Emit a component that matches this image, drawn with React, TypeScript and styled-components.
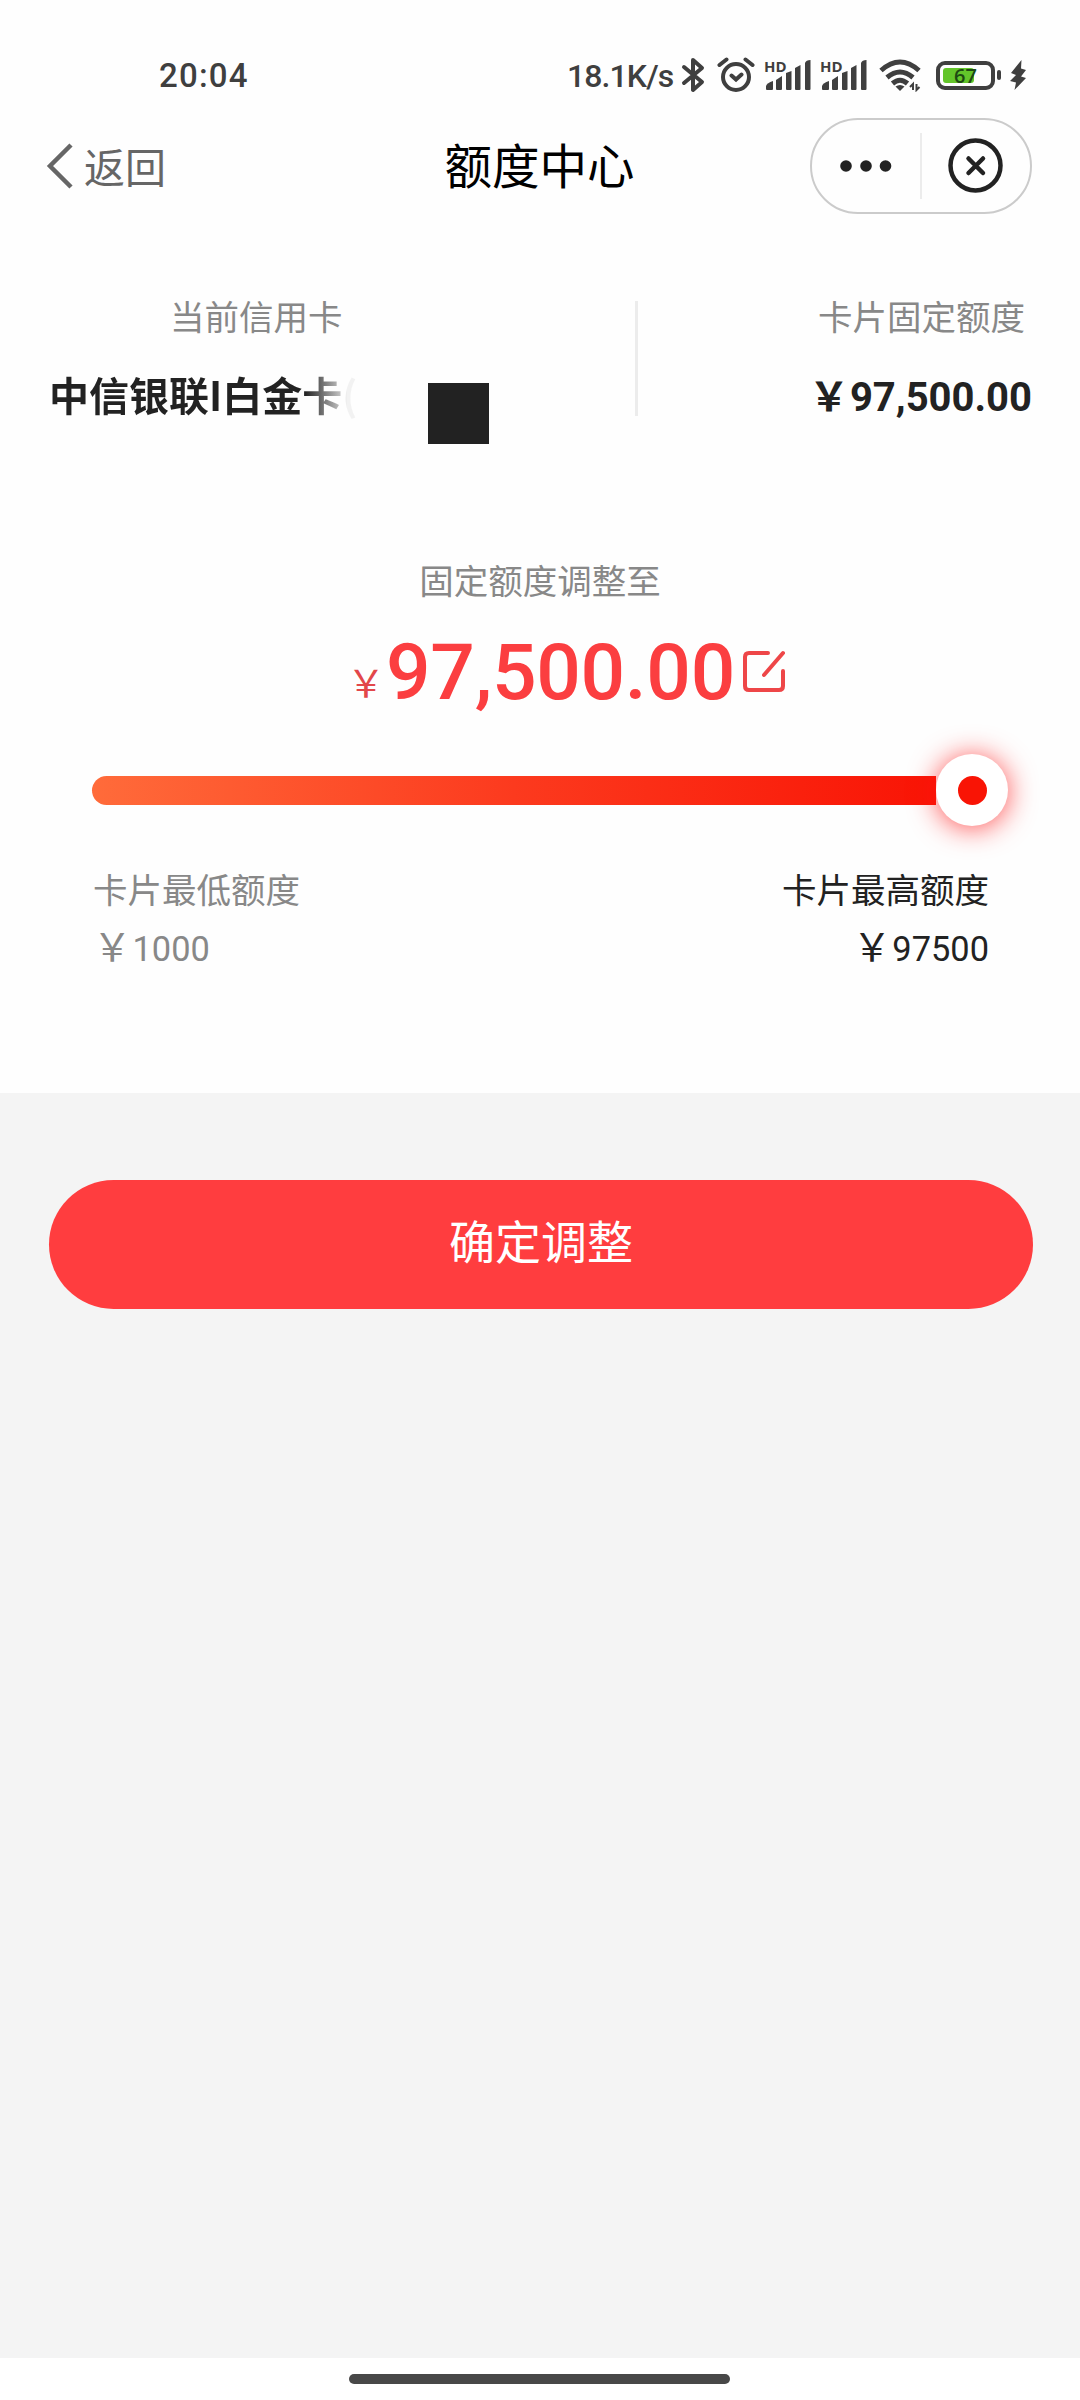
import React from "react";
import styled, { createGlobalStyle } from "styled-components";

const cjk = `"Noto Sans CJK SC", sans-serif`;
const latin = `Roboto, "Noto Sans CJK SC", sans-serif`;

const GlobalStyle = createGlobalStyle`
  * { box-sizing: border-box; }
  body { margin: 0; background: #fff; font-family: ${cjk}; }
`;

const Screen = styled.div`
  width: 1080px;
  height: 2400px;
  display: flex;
  flex-direction: column;
  background: #fefefe;
  overflow: hidden;
`;

const StatusBar = styled.header`
  height: 98px;
  padding: 52px 53px 0 159px;
  display: flex;
  justify-content: space-between;
  align-items: flex-start;
  color: #3f3f3f;
`;

const Clock = styled.span`
  padding-top: 1px;
  font: 500 33px/46px ${latin};
  letter-spacing: 1.2px;
`;

const StatusIcons = styled.div`
  display: flex;
  height: 46px;
  align-items: center;
`;

const Speed = styled.span`
  width: 112px;
  padding-top: 1px;
  font: 500 32px/46px ${latin};
  letter-spacing: -0.9px;
  white-space: nowrap;
`;

const StatusIcon = styled.svg<{ $gap: number }>`
  display: block;
  flex: none;
  margin-left: ${(p) => p.$gap}px;
`;

const Signal = styled.div<{ $gap: number }>`
  position: relative;
  width: 48px;
  height: 34px;
  margin-left: ${(p) => p.$gap}px;
`;

const HdTag = styled.span`
  position: absolute;
  left: 0;
  top: 1px;
  font: 700 15px/15px "Open Sans", sans-serif;
`;

const Battery = styled.div`
  width: 59px;
  height: 29px;
  margin-left: 15px;
  padding: 3px 3px;
  border: 4px solid #3f3f3f;
  border-radius: 9px;
  display: flex;
  position: relative;
`;

const Charge = styled.div`
  width: 31px;
  height: 15px;
  border-radius: 3px;
  background: #63c52a;
`;

const ChargeText = styled.span`
  position: absolute;
  inset: 0;
  text-align: center;
  font: 600 20px/21px "Open Sans", sans-serif;
  color: #1d4a12;
`;

const BatteryTip = styled.div`
  width: 4px;
  height: 10px;
  margin-left: 2px;
  border-radius: 2px;
  background: #3f3f3f;
`;

const NavBar = styled.nav`
  height: 136px;
  padding: 0 48px 0 46px;
  display: grid;
  grid-template-columns: 1fr auto 1fr;
  align-items: center;
`;

const Back = styled.button`
  display: flex;
  align-items: center;
  gap: 10px;
  padding: 0;
  border: 0;
  background: none;
  color: #666;
  font: 400 41px/60px ${cjk};
`;

const BackText = styled.span`
  padding-bottom: 2px;
`;

const Title = styled.h1`
  margin: 0;
  padding: 0 0 4px 1px;
  color: #000;
  font: 400 47.5px/64px ${cjk};
`;

const Capsule = styled.div`
  justify-self: end;
  width: 222px;
  height: 96px;
  border: 2px solid #cbcbcb;
  border-radius: 48px;
  display: grid;
  grid-template-columns: 110px 1fr;
  align-items: center;
`;

const MoreCell = styled.div`
  height: 66px;
  display: flex;
  align-items: center;
  justify-content: center;
  border-right: 2px solid #ececec;
`;

const CloseCell = styled.div`
  display: flex;
  justify-content: center;
`;

const Panel = styled.main`
  height: 859px;
  flex: none;
  background: #fefefe;
`;

const Summary = styled.section`
  height: 323px;
  padding: 59px 48px 0 49px;
  display: flex;
  align-items: flex-start;
`;

const CardColumn = styled.div`
  width: 586px;
  display: flex;
  flex-direction: column;
`;

const Label = styled.div`
  color: #888;
  font: 400 34.5px/44px ${cjk};
`;

const CardLabel = styled(Label)`
  padding-left: 121px;
`;

const CardRow = styled.div`
  display: flex;
  align-items: flex-start;
  margin-top: 29px;
`;

const CardName = styled.div`
  width: 379px;
  font: 700 40px/56px ${cjk};
  white-space: nowrap;
  color: transparent;
  background: linear-gradient(90deg, #222 0 256px, #c4c4c4 292px, #f2f2f2 298px);
  background-clip: text;
  -webkit-background-clip: text;
`;

const CardMask = styled.div`
  width: 61px;
  height: 61px;
  margin-top: 17px;
  background: #222;
`;

const Rule = styled.div`
  width: 3px;
  height: 115px;
  margin-top: 8px;
  background: #ececec;
`;

const LimitColumn = styled.div`
  flex: 1;
  display: flex;
  flex-direction: column;
  align-items: flex-end;
`;

const LimitLabel = styled(Label)`
  padding-right: 7px;
`;

const Money = styled.div<{ $size: number; $line: number; $weight: number }>`
  display: flex;
  align-items: baseline;
  font: ${(p) => p.$weight} ${(p) => p.$size}px/${(p) => p.$line}px ${latin};
`;

const Yen = styled.span<{ $size: number }>`
  margin-right: 1px;
  font-family: ${cjk};
  font-size: ${(p) => p.$size}px;
`;

const LimitMoney = styled(Money)`
  margin-top: 29px;
  color: #222;
`;

const Adjust = styled.section`
  display: flex;
  flex-direction: column;
  align-items: center;
`;

const AmountRow = styled.div`
  height: 96px;
  margin-top: 23px;
  padding-left: 347px;
  align-self: flex-start;
  display: flex;
  align-items: center;
  color: #fb3e40;
`;

const AmountYen = styled.span`
  width: 39px;
  margin-top: 18px;
  font: 400 38px/44px ${cjk};
  color: #e2474a;
`;

const Amount = styled.span`
  width: 350px;
  font: 500 78.5px/96px ${latin};
  letter-spacing: -0.3px;
`;

const EditIcon = styled.svg`
  display: block;
  margin-left: 6px;
`;

const Slider = styled.div`
  height: 72px;
  margin: 34px 72px 0 92px;
  display: flex;
  align-items: center;
`;

const Track = styled.div`
  flex: 1;
  height: 29px;
  border-radius: 15px 0 0 15px;
  background: linear-gradient(90deg, #ff6b3a 0%, #fc3a1e 50%, #f91405 100%);
`;

const Thumb = styled.div`
  width: 72px;
  height: 72px;
  border-radius: 50%;
  background: #fff;
  display: grid;
  place-items: center;
  box-shadow: 0 2px 28px rgba(255, 20, 20, 0.75);
`;

const ThumbDot = styled.div`
  width: 29px;
  height: 29px;
  border-radius: 50%;
  background: #f91405;
`;

const Range = styled.div`
  display: flex;
  justify-content: space-between;
  padding: 40px 91px 0 93px;
`;

const Bound = styled.div<{ $color: string; $end?: boolean }>`
  display: flex;
  flex-direction: column;
  align-items: ${(p) => (p.$end ? "flex-end" : "flex-start")};
  color: ${(p) => p.$color};
`;

const BoundLabel = styled(Label)`
  color: inherit;
`;

const BoundMoney = styled(Money)`
  margin-top: 12px;
`;

const Footer = styled.section`
  flex: 1;
  padding: 87px 47px 0 49px;
  background: #f4f4f4;
`;

const Confirm = styled.button`
  display: block;
  width: 100%;
  height: 129px;
  padding: 0 0 12px;
  border: 0;
  border-radius: 65px;
  background: #ff3d3f;
  color: #fff;
  font: 400 46px/60px ${cjk};
`;

const HomeArea = styled.div`
  height: 42px;
  padding: 16px 0 0 349px;
  background: #fff;
`;

const HomeBar = styled.div`
  width: 381px;
  height: 10px;
  border-radius: 5px;
  background: #484848;
`;

function SignalBars({ gap }: { gap: number }) {
  return (
    <Signal $gap={gap}>
      <HdTag>HD</HdTag>
      <svg width="48" height="34" fill="#3f3f3f">
        <path d="M2 31v-3q1-3 7-5v8q0 1-1 1H3q-1 0-1-1z" />
        <path d="M12 31V22l6-4v13q0 1-1 1h-4q-1 0-1-1z" />
        <path d="M22 31V15l5.500-2v18q0 1-1 1h-3.500q-1 0-1-1z" />
        <path d="M31 31V10l5.500-3v24q0 1-1 1h-3.500q-1 0-1-1z" />
        <path d="M41 31V5q1-3 5.500-3v29q0 1-1 1h-3.500q-1 0-1-1z" />
      </svg>
    </Signal>
  );
}

export default function App() {
  return (
    <>
      <GlobalStyle />
      <Screen>
        <StatusBar>
          <Clock>20:04</Clock>
          <StatusIcons>
            <Speed>18.1K/s</Speed>
            <StatusIcon $gap={2} width="24" height="36" fill="none" stroke="#3f3f3f" strokeWidth="4" strokeLinejoin="round" strokeLinecap="round">
              <path d="M3 10l18 15-9 8V3l9 8L3 26" />
            </StatusIcon>
            <StatusIcon $gap={12} width="38" height="36" fill="none" stroke="#3f3f3f" strokeWidth="4" strokeLinecap="round">
              <circle cx="19" cy="20" r="13" />
              <path d="M2.500 8l7-5.500M35.500 8l-7-5.500M14.500 18.500l4.500 4 5.500-5" />
            </StatusIcon>
            <SignalBars gap={9} />
            <SignalBars gap={8} />
            <StatusIcon $gap={10} width="43" height="34" fill="none" stroke="#3f3f3f" strokeWidth="5">
              <path d="M3 12.500q19-17 38 0M9 19.500q13-11 26 0M14.500 25.500q7.500-6.500 15 0" />
              <path d="M17.500 28.500q4.500-3 9 0l-4.500 4.500z" fill="#3f3f3f" stroke="none" />
              <path d="M35 32v-6l-3 3M38.500 26v6l3-3" strokeWidth="2" />
            </StatusIcon>
            <Battery>
              <Charge />
              <ChargeText>67</ChargeText>
            </Battery>
            <BatteryTip />
            <StatusIcon $gap={8} width="18" height="32" fill="#3f3f3f">
              <path d="M12.500 1L2 14l5 2-6 6 6 1.500L5.500 31 17 19l-5-1.500 5-6.500-5-1.500z" />
            </StatusIcon>
          </StatusIcons>
        </StatusBar>

        <NavBar>
          <Back>
            <svg width="28" height="46" fill="none" stroke="#666" strokeWidth="4.500">
              <path d="M25 2L4 23l21 21" />
            </svg>
            <BackText>返回</BackText>
          </Back>
          <Title>额度中心</Title>
          <Capsule>
            <MoreCell>
              <svg width="52" height="12" fill="#222">
                <circle cx="6" cy="6" r="5.800" />
                <circle cx="26" cy="6" r="5.800" />
                <circle cx="45.500" cy="6" r="5.800" />
              </svg>
            </MoreCell>
            <CloseCell>
              <svg width="56" height="56" fill="none" stroke="#222" strokeWidth="4.500" strokeLinecap="round">
                <circle cx="27.500" cy="27.500" r="25" />
                <path d="M20.500 20.500l14.500 14.500M35 20.500l-14.500 14.500" />
              </svg>
            </CloseCell>
          </Capsule>
        </NavBar>

        <Panel>
          <Summary>
            <CardColumn>
              <CardLabel>当前信用卡</CardLabel>
              <CardRow>
                <CardName>中信银联I白金卡(</CardName>
                <CardMask />
              </CardRow>
            </CardColumn>
            <Rule />
            <LimitColumn>
              <LimitLabel>卡片固定额度</LimitLabel>
              <LimitMoney $size={40} $line={56} $weight={700}>
                <Yen $size={40}>￥</Yen>97,500.00
              </LimitMoney>
            </LimitColumn>
          </Summary>

          <Adjust>
            <Label>固定额度调整至</Label>
            <AmountRow>
              <AmountYen>￥</AmountYen>
              <Amount>97,500.00</Amount>
              <EditIcon width="44" height="44" fill="none" stroke="#ee4648" strokeWidth="4" strokeLinecap="round">
                <path d="M26 3H7q-4 0-4 4v29q0 4 4 4h30q4 0 4-4V21M41 3L22 25" />
              </EditIcon>
            </AmountRow>
          </Adjust>

          <Slider>
            <Track />
            <Thumb>
              <ThumbDot />
            </Thumb>
          </Slider>

          <Range>
            <Bound $color="#888">
              <BoundLabel>卡片最低额度</BoundLabel>
              <BoundMoney $size={34.4} $line={44} $weight={400}>
                <Yen $size={38.5}>￥</Yen>1000
              </BoundMoney>
            </Bound>
            <Bound $color="#222" $end>
              <BoundLabel>卡片最高额度</BoundLabel>
              <BoundMoney $size={34.4} $line={44} $weight={400}>
                <Yen $size={38.5}>￥</Yen>97500
              </BoundMoney>
            </Bound>
          </Range>
        </Panel>

        <Footer>
          <Confirm>确定调整</Confirm>
        </Footer>
        <HomeArea>
          <HomeBar />
        </HomeArea>
      </Screen>
    </>
  );
}
